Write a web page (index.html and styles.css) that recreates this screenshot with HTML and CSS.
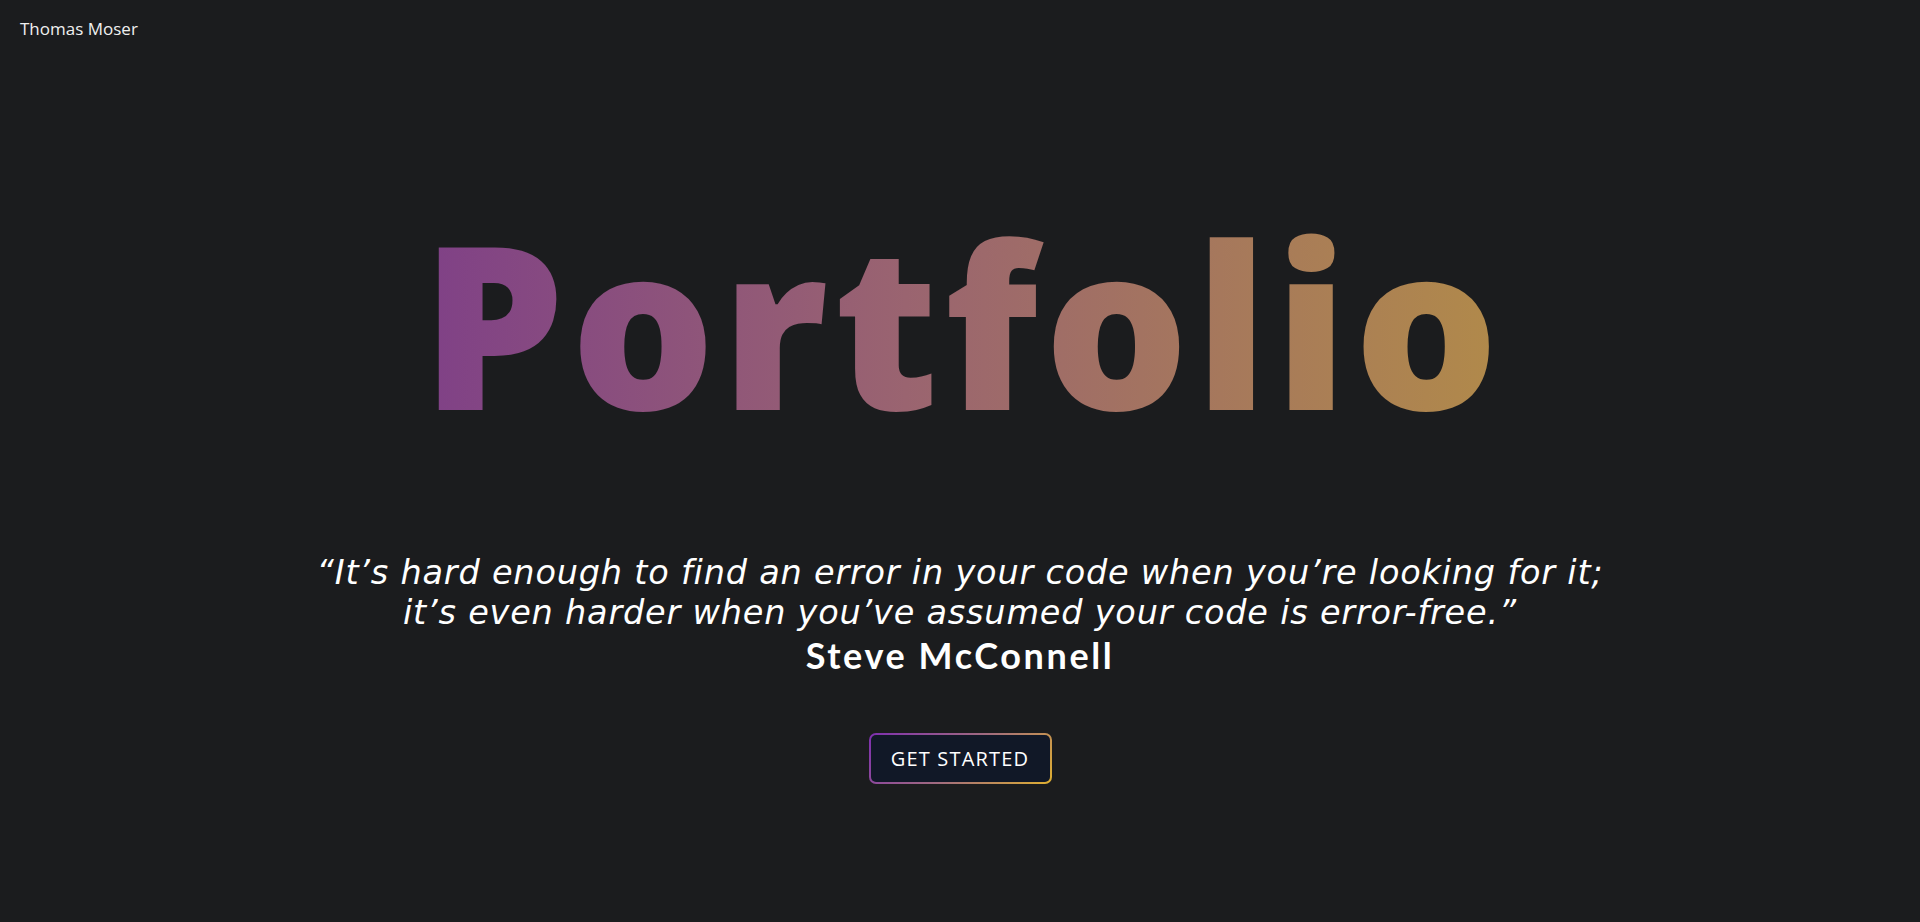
FILE: index.html
```html
<!DOCTYPE html>
<html lang="en">
<head>
<meta charset="utf-8">
<title>Thomas Moser - Portfolio</title>
<link rel="stylesheet" href="styles.css">
</head>
<body>
<header class="header">
  <span class="brand">Thomas Moser</span>
</header>
<main class="hero">
  <h1 class="title">Portfolio</h1>
  <blockquote class="quote">
    <p class="quote-text">“It’s hard enough to find an error in your code when you’re looking for it;<br>it’s even harder when you’ve assumed your code is error-free.”</p>
    <p class="quote-author">Steve McConnell</p>
  </blockquote>
  <button class="cta">GET STARTED</button>
</main>
</body>
</html>
```

FILE: styles.css
```css
html, body {
  margin: 0;
  padding: 0;
}
body {
  background: #1b1c1e;
  color: #ffffff;
  font-family: "Open Sans", "DejaVu Sans", sans-serif;
  min-height: 100vh;
}
.header {
  padding: 19px 20px 0;
  font-size: 17px;
  line-height: 20px;
  color: #f0f0f0;
}
.hero {
  display: flex;
  flex-direction: column;
  align-items: center;
}
.title {
  margin: 170px 0 0;
  padding-left: 6px;
  font-size: 227px;
  font-weight: 800;
  line-height: 1;
  letter-spacing: 6px;
  background: linear-gradient(90deg, #7f4087 0%, #9a6470 45%, #b18a4a 100%);
  -webkit-background-clip: text;
  background-clip: text;
  color: transparent;
}
.quote {
  margin: 116px 0 0;
  text-align: center;
}
.quote-text {
  margin: 0;
  font-family: "DejaVu Sans", sans-serif;
  font-size: 33.5px;
  font-style: italic;
  font-weight: 400;
  line-height: 40px;
  letter-spacing: 0.8px;
  padding-top: 1px;
}
.quote-author {
  margin: 0;
  font-family: "Lato", "Open Sans", sans-serif;
  font-size: 36px;
  font-weight: 700;
  line-height: 40px;
  padding-top: 2px;
  letter-spacing: 2.6px;
}
.cta {
  margin-top: 58px;
  width: 183px;
  height: 51px;
  padding: 0;
  border: 2px solid transparent;
  border-radius: 7px;
  background: linear-gradient(#111827, #111827) padding-box,
              linear-gradient(135deg, #7e2fb0 0%, #a06a80 50%, #e0b030 100%) border-box;
  color: #ffffff;
  font-family: "Open Sans", "DejaVu Sans", sans-serif;
  font-size: 20px;
  font-weight: 400;
  letter-spacing: 1.2px;
  cursor: pointer;
}
```
